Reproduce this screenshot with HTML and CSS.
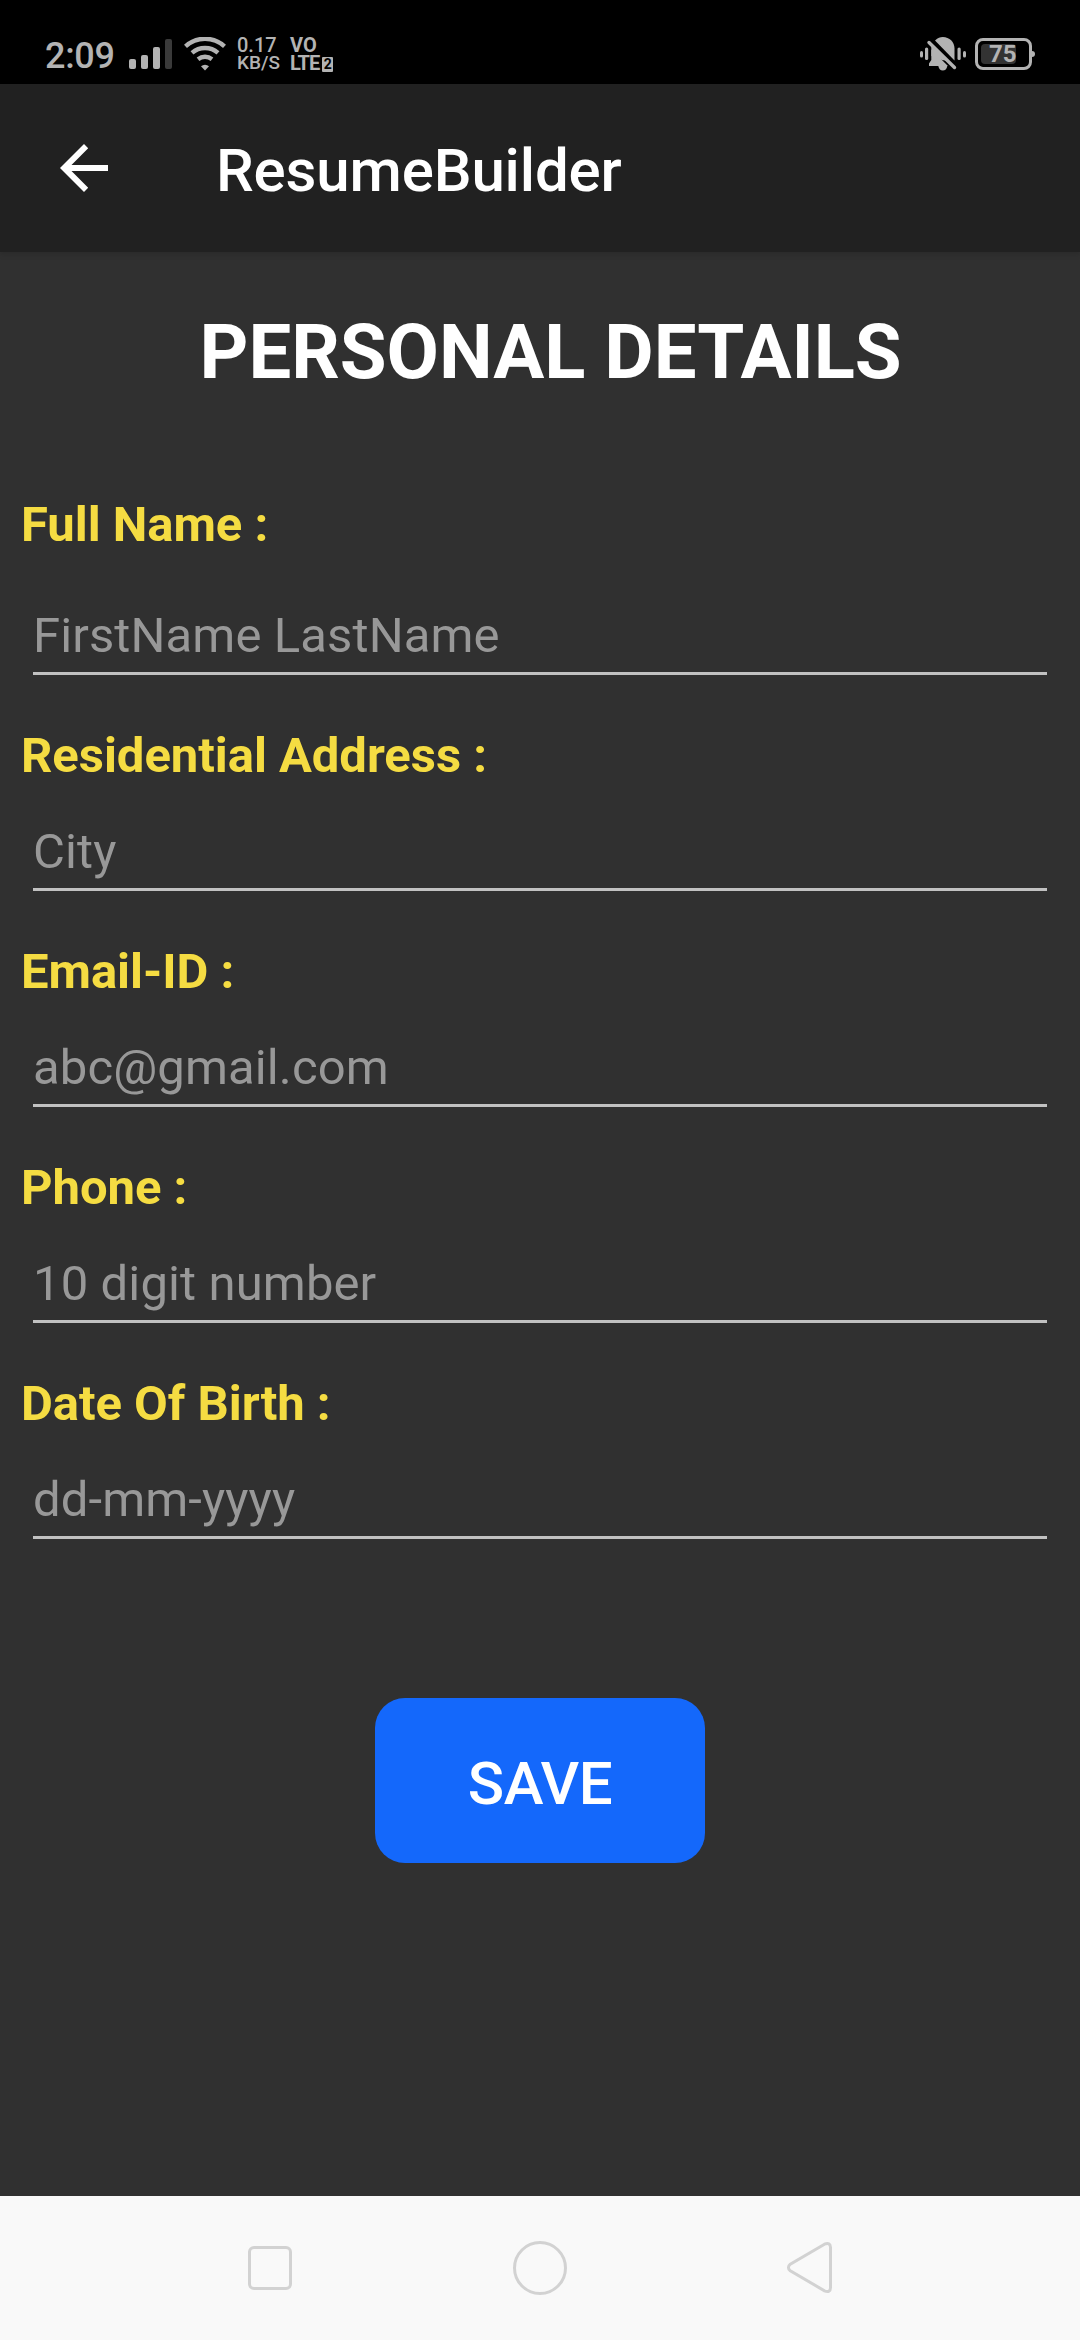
FILE: index.html
```html
<!DOCTYPE html>
<html lang="en">
<head>
<meta charset="utf-8">
<title>ResumeBuilder</title>
<link rel="stylesheet" href="styles.css">
</head>
<body>
<div class="screen">
  <div class="status">
    <span class="clock">2:09</span>
    <svg class="signal" width="44" height="32" viewBox="0 0 44 32" fill="#b3b3b3">
      <rect x="0" y="20" width="7" height="10" rx="2"/>
      <rect x="12" y="16" width="7" height="14" rx="2"/>
      <rect x="24" y="8" width="7" height="22" rx="2"/>
      <rect x="36" y="0" width="7" height="30" rx="2" fill="#3a3a3a"/>
    </svg>
    <svg class="wifi" width="42" height="34" viewBox="0 0 42 34" fill="none" stroke="#b3b3b3" stroke-width="4.4">
      <path d="M1.5 9.3A29 29 0 0 1 40.5 9.3"/>
      <path d="M8 15.8A20 20 0 0 1 34 15.8"/>
      <path d="M14 22.2A11.5 11.5 0 0 1 28 22.2"/>
      <path d="M21 33.5l-4-4.3a6 6 0 0 1 8 0z" fill="#b3b3b3" stroke="none"/>
    </svg>
    <span class="mini speed"><span class="rate">0.17</span><span>KB/S</span></span>
    <span class="mini volte"><span class="vo">VO</span><span class="lte">LTE<span class="sim">2</span></span></span>
    <svg class="mute" width="46" height="36" viewBox="0 0 46 36" fill="#b3b3b3">
      <rect x="0" y="15" width="3" height="6.500" rx="1.500"/>
      <rect x="5" y="11.500" width="3.200" height="12.500" rx="1.600"/>
      <rect x="37.500" y="11.500" width="3.200" height="12.500" rx="1.600"/>
      <rect x="43" y="15" width="3" height="6.500" rx="1.500"/>
      <path d="M15 4.500C18 1.500 20 1 22.800 1C29.500 1 34.500 6 34.500 12.500V24.500Z"/>
      <path d="M11.300 13.500V24L9 27.500V30H18.300C19 33.300 20.500 34.500 22.800 34.500S26.800 33.300 27.300 30H28Z"/>
      <path d="M9 6.500L34.500 31.500" stroke="#b3b3b3" stroke-width="3.400" stroke-linecap="round"/>
      <path d="M11.300 10V20L22 24L28 25Z"/>
    </svg>
    <span class="battery"><span class="charge">75</span></span>
  </div>
  <header class="appbar">
    <svg class="back" width="48" height="48" viewBox="0 0 48 48" fill="#fff"><path d="M48 21H11.500L28.200 4.200L24 0L0 24L24 48L28.200 43.800L11.500 27H48Z"/></svg>
    <span class="apptitle">ResumeBuilder</span>
  </header>
  <main class="content">
    <h1 class="heading">PERSONAL DETAILS</h1>
    <div class="field first"><div class="label">Full Name :</div><div class="entry">FirstName LastName</div></div>
    <div class="field"><div class="label">Residential Address :</div><div class="entry">City</div></div>
    <div class="field"><div class="label">Email-ID :</div><div class="entry">abc@gmail.com</div></div>
    <div class="field"><div class="label">Phone :</div><div class="entry">10 digit number</div></div>
    <div class="field"><div class="label">Date Of Birth :</div><div class="entry">dd-mm-yyyy</div></div>
    <button class="save">SAVE</button>
  </main>
  <nav class="navbar">
    <svg width="60" height="60" viewBox="0 0 60 60"><rect x="9.500" y="9.500" width="41" height="41" rx="4.500"/></svg>
    <svg width="60" height="60" viewBox="0 0 60 60"><circle cx="30" cy="30" r="25.500"/></svg>
    <svg width="60" height="60" viewBox="0 0 60 60"><path d="M44.500 6.200L10.300 26.200Q6.500 29.500 10.300 32.800L44.500 52.800Q50.500 55 50.500 49.500V9.500Q50.300 4 44.500 6.200Z"/></svg>
  </nav>
</div>
</body>
</html>
```

FILE: styles.css
```css
* { box-sizing: border-box; }
body { margin: 0; font-family: Roboto, sans-serif; background: #303030; }
.screen { width: 1080px; height: 2340px; display: flex; flex-direction: column; }

.status { height: 84px; background: #000; color: #b3b3b3; display: flex; align-items: flex-start; padding-left: 45px; }
.clock { font-size: 36px; font-weight: 500; letter-spacing: -0.3px; line-height: 42px; margin-top: 35px; width: 84px; }
.signal { margin-top: 39px; width: 44px; }
.wifi { margin: 37px 0 0 11px; }
.mini { display: flex; flex-direction: column; font-weight: 500; font-size: 19px; line-height: 17px; white-space: nowrap; }
.speed { margin: 37px 0 0 11px; width: 53px; }
.rate, .vo { font-size: 20px; }
.volte { margin: 37px 0 0 0; width: 48px; font-weight: 700; }
.lte { display: flex; align-items: flex-start; font-size: 20px; line-height: 19px; letter-spacing: -1px; }
.sim { background: #b3b3b3; color: #000; font-size: 14px; line-height: 15px; width: 11px; height: 15px; text-align: center; margin: 3px 0 0 3px; border-radius: 1px; letter-spacing: 0; }
.mute { margin: 36px 0 0 582px; }
.battery { margin: 38px 0 0 9px; width: 57px; height: 32px; border: 3px solid #b3b3b3; border-radius: 8px; padding: 3px; position: relative; }
.battery::after { content: ""; position: absolute; right: -6px; top: 10px; width: 3px; height: 6px; background: #b3b3b3; border-radius: 0 3px 3px 0; }
.charge { display: block; width: 35px; height: 20px; border-radius: 4px; background: #333; font-size: 24px; font-weight: 700; line-height: 21px; padding-left: 8px; }

.appbar { height: 168px; background: #212121; display: flex; align-items: center; padding-left: 60px; box-shadow: 0 2px 6px rgba(0,0,0,.15); }
.apptitle { color: #fff; font-size: 60px; font-weight: 500; letter-spacing: -0.15px; line-height: 70px; margin: 5px 0 0 108px; }

.content { flex: 1; display: flex; flex-direction: column; padding: 56px 33px 0 21px; }
.heading { margin: 0; color: #fff; font-size: 76px; font-weight: 700; line-height: 88px; text-align: center; padding-left: 33px; }
.field { margin-top: 53px; }
.first { margin-top: 101px; }
.label { color: #f5dc42; font-size: 49px; font-weight: 700; line-height: 56px; letter-spacing: -0.04px; }
.entry { color: #989898; font-size: 49px; line-height: 56px; letter-spacing: 0.12px; margin: 40px 0 0 12px; padding-bottom: 8px; border-bottom: 3px solid #c1c1c1; }
.first .entry { margin-top: 55px; }
.save { align-self: center; margin: 159px 0 0 12px; width: 330px; height: 165px; border: 0; border-radius: 30px; background: #1468fb; color: #fff; font: 500 60px/70px Roboto, sans-serif; letter-spacing: -0.5px; padding: 6px 0 0; }

.navbar { height: 144px; background: #f9f9f9; display: flex; align-items: center; justify-content: center; gap: 210px; }
.navbar svg { fill: none; stroke: #d2d2d2; stroke-width: 3; }
```
